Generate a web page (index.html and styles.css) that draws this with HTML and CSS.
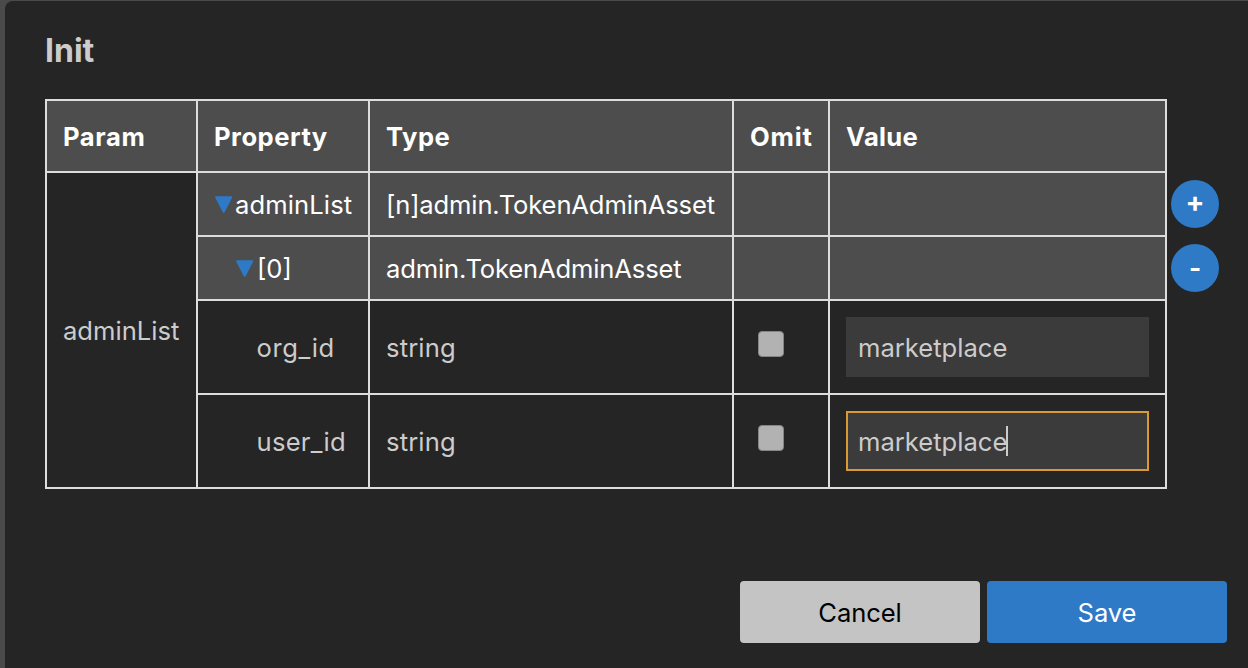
FILE: index.html
```html
<!DOCTYPE html>
<html lang="en">
<head>
<meta charset="utf-8">
<title>Init</title>
<link rel="stylesheet" href="styles.css">
</head>
<body>
<main class="modal">
  <h1 class="title"><span>Init</span></h1>
  <div class="params">
    <table class="grid">
      <colgroup><col class="c-param"><col class="c-prop"><col class="c-type"><col class="c-omit"><col class="c-value"></colgroup>
      <thead>
        <tr class="head"><th><span class="t-param">Param</span></th><th><span class="t-prop">Property</span></th><th><span class="t-type">Type</span></th><th><span class="t-omit">Omit</span></th><th><span class="t-value">Value</span></th></tr>
      </thead>
      <tbody>
        <tr class="group">
          <td class="name" rowspan="4"><span>adminList</span></td>
          <td><div class="node"><svg class="arrow" viewBox="0 0 18 18"><path d="M1.2 1.2H16.2L8.7 15.8Z"/></svg><span class="t-list">adminList</span></div></td>
          <td><span class="t-asset">[n]admin.TokenAdminAsset</span></td><td></td><td></td>
        </tr>
        <tr class="group">
          <td><div class="node child"><svg class="arrow" viewBox="0 0 18 18"><path d="M1.2 1.2H16.2L8.7 15.8Z"/></svg><span>[0]</span></div></td>
          <td><span class="t-asset">admin.TokenAdminAsset</span></td><td></td><td></td>
        </tr>
        <tr class="field">
          <td><span class="leaf t-org">org_id</span></td><td><span class="t-str">string</span></td>
          <td class="omit"><span class="check"></span></td>
          <td class="value"><div class="input"><span>marketplace</span></div></td>
        </tr>
        <tr class="field">
          <td><span class="leaf t-user">user_id</span></td><td><span class="t-str">string</span></td>
          <td class="omit"><span class="check"></span></td>
          <td class="value"><div class="input focused"><span>marketplace</span><i class="caret"></i></div></td>
        </tr>
      </tbody>
    </table>
    <div class="side">
      <button class="round add" aria-label="Add"><span>+</span></button>
      <button class="round" aria-label="Remove"><span>-</span></button>
    </div>
  </div>
  <div class="footer">
    <button class="btn cancel"><span>Cancel</span></button>
    <button class="btn save"><span>Save</span></button>
  </div>
</main>
</body>
</html>
```
FILE: styles.css
```css
* { box-sizing: border-box; }
body {
  margin: 0;
  height: 668px;
  padding: 1px 0 0 5px;
  overflow: hidden;
  background: #4a4a4a;
  font: 25.6px/32px Inter, "Liberation Sans", sans-serif;
  color: #ccc;
}
.modal {
  height: 667px;
  padding: 30px 0 0 40px;
  background: #252525;
  border-radius: 8px 0 0 0;
}
.title { margin: 0; height: 68px; font-size: 32px; line-height: 40px; font-weight: 700; letter-spacing: 0; }
.params { display: flex; gap: 4px; }
.grid { width: 1122px; flex: none; border-collapse: collapse; table-layout: fixed; }
.c-param { width: 151px; }
.c-prop { width: 172px; }
.c-type { width: 364px; }
.c-omit { width: 96px; }
.c-value { width: 337px; }
.grid th, .grid td { border: 2px solid #ddd; padding: 2px 16px 0; text-align: left; white-space: nowrap; }
.grid .value { padding-top: 0; }
.head { height: 72px; background: #4d4d4d; color: #fff; }
.head th { font-weight: 700; }
.group { height: 64px; background: #4d4d4d; color: #fff; }
.field { height: 94px; }
.name { background: #252525; color: #ccc; }
.node { display: flex; align-items: center; gap: 2px; padding-left: 1px; }
.child { padding-left: 22px; gap: 3px; }
.arrow { width: 18px; height: 18px; flex: none; margin-top: -1px; fill: #2e7ac7; stroke: #2e7ac7; stroke-width: 2; stroke-linejoin: round; }
.t-param { letter-spacing: 0.6px; }
.t-prop { letter-spacing: 0.5px; }
.t-type { letter-spacing: 0.5px; }
.t-omit { letter-spacing: 0.8px; }
.t-value { letter-spacing: 0.3px; }
.t-list { letter-spacing: 0.1px; }
.t-asset { letter-spacing: -0.15px; }
.t-str { letter-spacing: 0.15px; }
.t-org { letter-spacing: 0.6px; }
.t-user { letter-spacing: 0.25px; }
.leaf { margin-left: 42.5px; }
.grid .omit { padding: 0 0 6px 24px; }
.check { display: block; width: 26px; height: 26px; border: 1px solid #858585; border-radius: 4px; background: #b2b2b2; }
.input { display: flex; align-items: center; width: 303px; height: 60px; padding: 2px 10px 0; border: 2px solid #3b3b3b; background: #3b3b3b; }
.focused { border-color: #d99a36; }
.caret { width: 2px; height: 30px; margin-left: -1px; margin-top: -2px; background: #ccc; }
.side { display: flex; flex-direction: column; gap: 16px; padding-top: 81px; }
.round { width: 48px; height: 48px; padding: 0 0 1px; border: 0; border-radius: 50%; background: #2e7ac7; color: #fff; font: 700 26px/40px Inter, sans-serif; }
.add { padding-bottom: 4px; font-size: 28px; }
.footer { display: flex; justify-content: flex-end; gap: 7px; margin-top: 92px; padding-right: 21px; }
.btn { width: 240px; height: 62px; padding: 2px 0 0; border: 0; border-radius: 4px; font: 25.6px/32px Inter, sans-serif; letter-spacing: -0.1px; }
.cancel { background: #c4c4c4; color: #000; }
.save { background: #2e7ac7; color: #fff; }
```
